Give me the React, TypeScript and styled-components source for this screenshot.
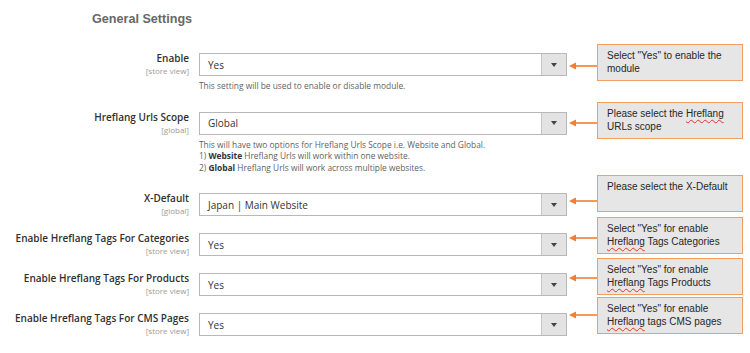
import React from "react";
import styled, { createGlobalStyle } from "styled-components";

const Global = createGlobalStyle`
  html, body { margin: 0; padding: 0; background: #ffffff; }
  body { font-family: "Open Sans", "Liberation Sans", sans-serif; }
`;

const Page = styled.div`
  width: 750px;
  height: 353px;
  display: grid;
  grid-template-columns: 569px 174px;
  overflow: hidden;
`;

const Form = styled.div`
  display: flex;
  flex-direction: column;
  gap: 17px;
  padding-top: 11px;
`;

const Title = styled.h2`
  margin: 0 0 9px 92px;
  font-family: "Liberation Sans", Arial, sans-serif;
  font-weight: 700;
  font-size: 12.6px;
  line-height: 16px;
  color: #676767;
`;

const Row = styled.div`
  display: grid;
  grid-template-columns: 189px 368px;
  column-gap: 10px;
  align-items: start;
`;

const Label = styled.div`
  margin: -1px 0 -3px;
  text-align: right;
  display: flex;
  flex-direction: column;
  align-items: flex-end;
`;

const LabelText = styled.span`
  font-weight: 600;
  font-size: 10px;
  line-height: 13px;
  color: #303030;
`;

const Scope = styled.span`
  font-size: 8px;
  line-height: 12px;
  color: #9a9a9a;
`;

const Field = styled.div`
  display: flex;
  flex-direction: column;
`;

const SelectBox = styled.div`
  height: 23px;
  box-sizing: border-box;
  border: 1px solid #b8b8b8;
  display: flex;
  align-items: stretch;
  background: #fff;
`;

const Value = styled.div`
  flex: 1;
  display: flex;
  align-items: center;
  padding-left: 8px;
  font-size: 10px;
  color: #333;
`;

const DropButton = styled.div`
  width: 24px;
  background: #e3e3e3;
  border-left: 1px solid #c4c4c4;
  display: flex;
  align-items: center;
  justify-content: center;
  &::after {
    content: "";
    border-left: 3px solid transparent;
    border-right: 3px solid transparent;
    border-top: 4px solid #444;
  }
`;

const Note = styled.div`
  margin: 4px 0 3px;
  font-size: 8.4px;
  line-height: 11.5px;
  color: #5f5f5f;
  b { font-weight: 700; color: #333; }
`;

const Notes = styled.div`
  display: flex;
  flex-direction: column;
`;

const Callout = styled.div<{ $top: number }>`
  margin-top: ${(p) => p.$top}px;
  display: flex;
  align-items: flex-start;
`;

const Arrow = styled.svg<{ $y: number }>`
  width: 28px;
  height: 8px;
  margin-top: ${(p) => p.$y - 4}px;
  flex: none;
`;

const Box = styled.div`
  width: 146px;
  height: 37px;
  box-sizing: border-box;
  border: 1.5px solid #f2a062;
  background: #e6e6e6;
  padding: 4px 8px 0 9px;
  font-family: "Liberation Sans", Arial, sans-serif;
  font-size: 10px;
  line-height: 13px;
  color: #262626;
`;

const Spell = styled.span`
  text-decoration: underline wavy #e03030;
  text-decoration-thickness: 1px;
  text-underline-offset: 2px;
`;

const ArrowIcon = ({ y }: { y: number }) => (
  <Arrow $y={y} viewBox="0 0 28 8">
    <line x1="6" y1="4" x2="28" y2="4" stroke="#ee7f35" strokeWidth="1.6" />
    <polygon points="0,4 7,0.5 7,7.5" fill="#ee7f35" />
  </Arrow>
);

type RowData = {
  label: string;
  scope: string;
  value: string;
  note?: React.ReactNode;
};

const rows: RowData[] = [
  {
    label: "Enable",
    scope: "[store view]",
    value: "Yes",
    note: <>This setting will be used to enable or disable module.</>,
  },
  {
    label: "Hreflang Urls Scope",
    scope: "[global]",
    value: "Global",
    note: (
      <>
        This will have two options for Hreflang Urls Scope i.e. Website and Global.
        <br />
        1) <b>Website</b> Hreflang Urls will work within one website.
        <br />
        2) <b>Global</b> Hreflang Urls will work across multiple websites.
      </>
    ),
  },
  { label: "X-Default", scope: "[global]", value: "Japan | Main Website" },
  { label: "Enable Hreflang Tags For Categories", scope: "[store view]", value: "Yes" },
  { label: "Enable Hreflang Tags For Products", scope: "[store view]", value: "Yes" },
  { label: "Enable Hreflang Tags For CMS Pages", scope: "[store view]", value: "Yes" },
];

type CalloutData = { top: number; arrow: number; text: React.ReactNode };

const callouts: CalloutData[] = [
  { top: 44, arrow: 22, text: <>Select "Yes" to enable the module</> },
  {
    top: 21,
    arrow: 21,
    text: (
      <>
        Please select the <Spell>Hreflang</Spell> URLs scope
      </>
    ),
  },
  { top: 36, arrow: 26, text: <>Please select the X-Default</> },
  {
    top: 5,
    arrow: 21,
    text: (
      <>
        Select "Yes" for enable
        <br />
        <Spell>Hreflang</Spell> Tags Categories
      </>
    ),
  },
  {
    top: 4,
    arrow: 20,
    text: (
      <>
        Select "Yes" for enable
        <br />
        <Spell>Hreflang</Spell> Tags Products
      </>
    ),
  },
  {
    top: 2,
    arrow: 18,
    text: (
      <>
        Select "Yes" for enable
        <br />
        <Spell>Hreflang</Spell> tags CMS pages
      </>
    ),
  },
];

export default function App() {
  return (
    <>
      <Global />
      <Page>
        <Form>
          <Title>General Settings</Title>
          {rows.map((r) => (
            <Row key={r.label}>
              <Label>
                <LabelText>{r.label}</LabelText>
                <Scope>{r.scope}</Scope>
              </Label>
              <Field>
                <SelectBox>
                  <Value>{r.value}</Value>
                  <DropButton />
                </SelectBox>
                {r.note && <Note>{r.note}</Note>}
              </Field>
            </Row>
          ))}
        </Form>
        <Notes>
          {callouts.map((c, i) => (
            <Callout key={i} $top={c.top}>
              <ArrowIcon y={c.arrow} />
              <Box>{c.text}</Box>
            </Callout>
          ))}
        </Notes>
      </Page>
    </>
  );
}
